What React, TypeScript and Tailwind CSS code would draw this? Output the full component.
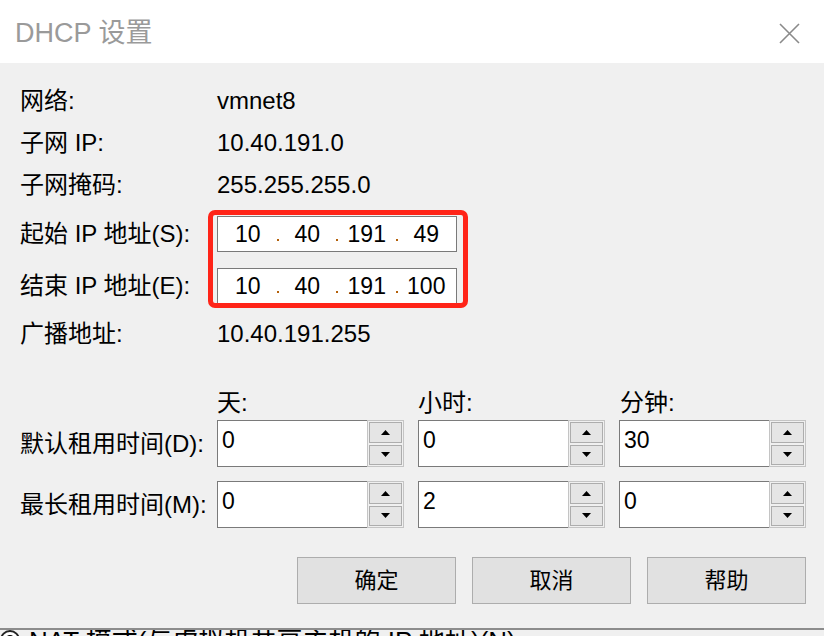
import React from "react";

function Arrow({ up }: { up?: boolean }) {
  return (
    <svg width="9" height="5" viewBox="0 0 9 5">
      <path d={up ? "M0 5 L4.5 0 L9 5 Z" : "M0 0 L4.5 5 L9 0 Z"} fill="#000" />
    </svg>
  );
}

function Spin({ value }: { value: string }) {
  return (
    <div className="flex h-[47px] w-[187px]">
      <div className="flex-1 border border-r-0 border-[#7a7a7a] bg-white pl-[4px] pt-[8px] text-[23px] leading-none">
        {value}
      </div>
      <div className="flex w-[37px] flex-col gap-[2px] border border-[#c4c4c4] bg-[#f0f0f0] p-px">
        <div className="flex flex-1 items-center justify-center border border-[#adadad] bg-[#e5e5e5]">
          <Arrow up />
        </div>
        <div className="flex flex-1 items-center justify-center border border-[#adadad] bg-[#e5e5e5]">
          <Arrow />
        </div>
      </div>
    </div>
  );
}

function IpBox({ parts }: { parts: string[] }) {
  return (
    <div className="flex h-[36px] w-[240px] items-center border border-[#7a7a7a] bg-white px-px text-[23px]">
      {parts.map((p, i) => (
        <React.Fragment key={i}>
          {i > 0 && (
            <div className="flex h-full w-[2px] items-end pb-[10px]">
              <div className="h-[2px] w-[2px] bg-[#b4610a]" />
            </div>
          )}
          <div className="flex-1 text-center leading-none">{p}</div>
        </React.Fragment>
      ))}
    </div>
  );
}

function InfoRow({ label, value }: { label: string; value: string }) {
  return (
    <div className="grid h-[42px] grid-cols-[197px_1fr] items-center">
      <div>{label}</div>
      <div>{value}</div>
    </div>
  );
}

export default function App() {
  return (
    <div className="flex h-[636px] w-[824px] flex-col overflow-hidden bg-white font-['Liberation_Sans','Noto_Sans_CJK_SC',sans-serif] text-[24px] text-black">
      {/* window behind, only its bottom edge peeks out */}
      <div className="flex h-[3px] overflow-hidden text-[22px] leading-[22px] text-[#333]">
        <div className="-mt-[21px] flex">
          <span className="ml-[8px]">名称</span>
          <span className="ml-[69px]">类型</span>
          <span className="ml-[91px]">外部连接</span>
          <span className="ml-[271px]">主机连接</span>
        </div>
      </div>

      <div className="flex h-[60px] items-center justify-between bg-white pl-[15px] pr-[24px]">
        <div className="text-[27px] text-[#9a9a9a]">DHCP 设置</div>
        <svg width="21" height="21" viewBox="0 0 21 21">
          <path d="M1 1 L20 20 M20 1 L1 20" stroke="#8a8a8a" strokeWidth="1.6" />
        </svg>
      </div>

      <div className="flex h-[565px] flex-col bg-[#f0f0f0] pl-[20px] pr-[18px] pt-[17px]">
        <InfoRow label="网络:" value="vmnet8" />
        <InfoRow label="子网 IP:" value="10.40.191.0" />
        <InfoRow label="子网掩码:" value="255.255.255.0" />

        <div className="mt-[10px] grid grid-cols-[197px_1fr] gap-y-[16px]">
          <div className="flex items-center">起始 IP 地址(S):</div>
          <div className="relative">
            <IpBox parts={["10", "40", "191", "49"]} />
            <div className="absolute left-[-9px] top-[-6px] h-[98px] w-[260px] rounded-[7px] border-[5px] border-[#ff2418]" />
          </div>
          <div className="flex items-center">结束 IP 地址(E):</div>
          <IpBox parts={["10", "40", "191", "100"]} />
        </div>

        <div className="mt-[9px]">
          <InfoRow label="广播地址:" value="10.40.191.255" />
        </div>

        <div className="mt-[30px] grid h-[30px] grid-cols-[197px_201px_202px_1fr] items-center">
          <div />
          <div>天:</div>
          <div>小时:</div>
          <div>分钟:</div>
        </div>

        <div className="mt-[5px] flex items-center">
          <div className="w-[197px]">默认租用时间(D):</div>
          <div className="flex gap-[14px]">
            <Spin value="0" />
            <Spin value="0" />
            <Spin value="30" />
          </div>
        </div>

        <div className="mt-[14px] flex items-center">
          <div className="w-[197px]">最长租用时间(M):</div>
          <div className="flex gap-[14px]">
            <Spin value="0" />
            <Spin value="2" />
            <Spin value="0" />
          </div>
        </div>

        <div className="mt-[29px] flex justify-end gap-[16px] text-[22px]">
          <div className="flex h-[47px] w-[159px] items-center justify-center border border-[#adadad] bg-[#e1e1e1]">确定</div>
          <div className="flex h-[47px] w-[159px] items-center justify-center border border-[#adadad] bg-[#e1e1e1]">取消</div>
          <div className="flex h-[47px] w-[159px] items-center justify-center border border-[#adadad] bg-[#e1e1e1]">帮助</div>
        </div>
      </div>

      <div className="h-[8px] overflow-hidden border-t-2 border-[#8c8c8c] bg-[#f0f0f0]">
        <div className="-mt-[2px] flex items-start gap-[9px] text-[26px] leading-none">
          <div className="mt-[2px] flex h-[20px] w-[20px] items-center justify-center rounded-full border-2 border-[#222] bg-white">
            <div className="h-[10px] w-[10px] rounded-full bg-black" />
          </div>
          <div>NAT 模式(与虚拟机共享主机的 IP 地址)(N)</div>
        </div>
      </div>
    </div>
  );
}
